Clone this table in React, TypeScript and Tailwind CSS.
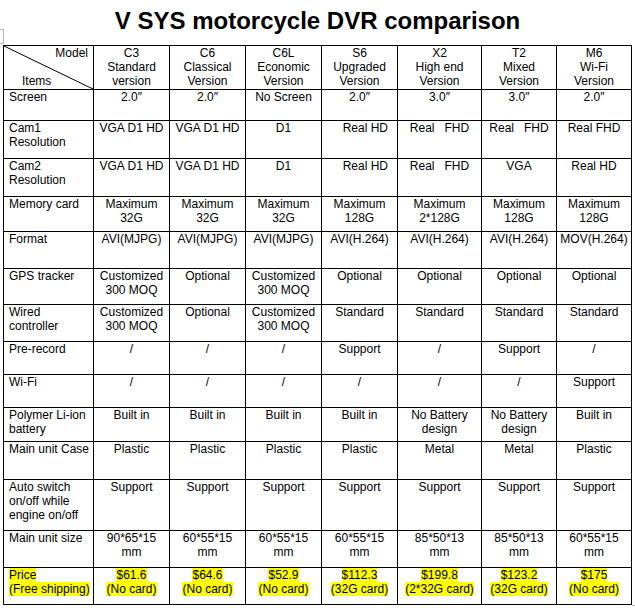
import React from 'react';

type Cell = { lines: string[]; cls?: string };
type Row = { label: string[]; cells: (string[] | Cell)[] };

const models = [
    ['C3', 'Standard', 'version'],
    ['C6', 'Classical', 'Version'],
    ['C6L', 'Economic', 'Version'],
    ['S6', 'Upgraded', 'Version'],
    ['X2', 'High end', 'Version'],
    ['T2', 'Mixed', 'Version'],
    ['M6', 'Wi-Fi', 'Version'],
];

const realHd: Cell = { lines: ['Real HD'], cls: 'text-right pr-[9px]' };

const rows: Row[] = [
    { label: ['Screen'], cells: [['2.0″'], ['2.0″'], ['No Screen'], ['2.0″'], ['3.0″'], ['3.0″'], ['2.0″']] },
    { label: ['Cam1', 'Resolution'], cells: [['VGA D1 HD'], ['VGA D1 HD'], ['D1'], realHd, ['Real   FHD'], ['Real   FHD'], ['Real FHD']] },
    { label: ['Cam2', 'Resolution'], cells: [['VGA D1 HD'], ['VGA D1 HD'], ['D1'], realHd, ['Real   FHD'], ['VGA'], ['Real HD']] },
    { label: ['Memory card'], cells: [['Maximum', '32G'], ['Maximum', '32G'], ['Maximum', '32G'], ['Maximum', '128G'], ['Maximum', '2*128G'], ['Maximum', '128G'], ['Maximum', '128G']] },
    { label: ['Format'], cells: [['AVI(MJPG)'], ['AVI(MJPG)'], ['AVI(MJPG)'], ['AVI(H.264)'], ['AVI(H.264)'], ['AVI(H.264)'], ['MOV(H.264)']] },
    { label: ['GPS tracker'], cells: [['Customized', '300 MOQ'], ['Optional'], ['Customized', '300 MOQ'], ['Optional'], ['Optional'], ['Optional'], ['Optional']] },
    { label: ['Wired', 'controller'], cells: [['Customized', '300 MOQ'], ['Optional'], ['Customized', '300 MOQ'], ['Standard'], ['Standard'], ['Standard'], ['Standard']] },
    { label: ['Pre-record'], cells: [['/'], ['/'], ['/'], ['Support'], ['/'], ['Support'], ['/']] },
    { label: ['Wi-Fi'], cells: [['/'], ['/'], ['/'], ['/'], ['/'], ['/'], ['Support']] },
    { label: ['Polymer Li-ion', 'battery'], cells: [['Built in'], ['Built in'], ['Built in'], ['Built in'], ['No Battery', 'design'], ['No Battery', 'design'], ['Built in']] },
    { label: ['Main unit Case'], cells: [['Plastic'], ['Plastic'], ['Plastic'], ['Plastic'], ['Metal'], ['Metal'], ['Plastic']] },
    { label: ['Auto switch', 'on/off while', 'engine on/off'], cells: [['Support'], ['Support'], ['Support'], ['Support'], ['Support'], ['Support'], ['Support']] },
    { label: ['Main unit size'], cells: [['90*65*15', 'mm'], ['60*55*15', 'mm'], ['60*55*15', 'mm'], ['60*55*15', 'mm'], ['85*50*13', 'mm'], ['85*50*13', 'mm'], ['60*55*15', 'mm']] },
];

const prices = [
    ['$61.6', '(No card)'],
    ['$64.6', '(No card)'],
    ['$52.9', '(No card)'],
    ['$112.3', '(32G card)'],
    ['$199.8', '(2*32G card)'],
    ['$123.2', '(32G card)'],
    ['$175', '(No card)'],
];

const cellBase = 'border-r border-b border-black overflow-hidden whitespace-pre leading-[14px]';

function Lines({ lines }: { lines: string[] }) {
    return (
        <>
            {lines.map((l, i) => (
                <div key={i}>{l}</div>
            ))}
        </>
    );
}

function Marked({ lines }: { lines: string[] }) {
    return (
        <>
            {lines.map((l, i) => (
                <div key={i}>
                    <span className="bg-[#ffff00]">{l}</span>
                </div>
            ))}
        </>
    );
}

export default function App() {
    return (
        <div className="relative w-[635px] h-[608px] bg-white text-black">
            <div className="h-[45px] pt-[7px] text-center text-[24px] leading-[28px] font-bold font-['Liberation_Sans',Arial,sans-serif]">
                V SYS motorcycle DVR comparison
            </div>

            {/* little grey handles left over from the source picture */}
            <div className="absolute left-0 top-[29px] w-[4px] h-[15px] border border-l-0 border-[#b5b5b5]" />
            <div className="absolute left-[632px] top-[605px] w-[3px] h-[1px] bg-[#b5b5b5]" />

            <div className="ml-[3px] w-[629px] grid grid-cols-[90px_76px_76px_76px_76px_84px_75px_75px] grid-rows-[44px_31px_38px_38px_35px_37px_36px_37px_33px_33px_34px_38px_51px_37px_37px] border-l border-t border-black text-[12px] font-['Liberation_Sans',Arial,sans-serif]">
                {/* header */}
                <div className={`${cellBase} relative`}>
                    <svg className="absolute inset-0" width="89" height="43">
                        <line x1="0" y1="0" x2="89" y2="43" stroke="black" strokeWidth="1" />
                    </svg>
                    <div className="relative text-right pr-[5px]">Model</div>
                    <div className="relative pl-[18px] pt-[14px]">Items</div>
                </div>
                {models.map((m, i) => (
                    <div key={i} className={`${cellBase} text-center`}>
                        <Lines lines={m} />
                    </div>
                ))}

                {rows.map((r, ri) => (
                    <React.Fragment key={ri}>
                        <div className={`${cellBase} pl-[5px]`}>
                            <Lines lines={r.label} />
                        </div>
                        {r.cells.map((c, ci) => {
                            const cell: Cell = Array.isArray(c) ? { lines: c } : c;
                            return (
                                <div key={ci} className={`${cellBase} ${cell.cls ?? 'text-center'}`}>
                                    <Lines lines={cell.lines} />
                                </div>
                            );
                        })}
                    </React.Fragment>
                ))}

                {/* price row */}
                <div className={`${cellBase} pl-[5px]`}>
                    <Marked lines={['Price', '(Free shipping)']} />
                </div>
                {prices.map((p, i) => (
                    <div key={i} className={`${cellBase} text-center`}>
                        <Marked lines={p} />
                    </div>
                ))}
            </div>
        </div>
    );
}
